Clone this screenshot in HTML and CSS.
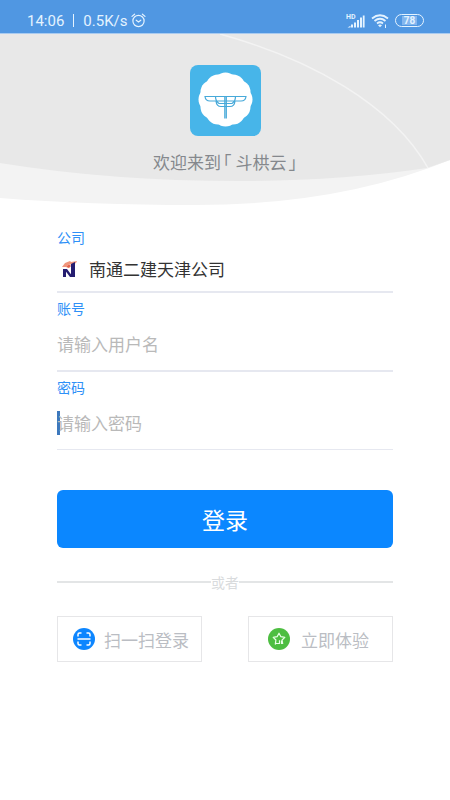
FILE: index.html
```html
<!DOCTYPE html>
<html lang="zh-CN">
<head>
<meta charset="utf-8">
<meta name="viewport" content="width=device-width, initial-scale=1">
<title>登录</title>
<link rel="stylesheet" href="styles.css">
</head>
<body>
<header class="status">
  <div class="status-group">
    <span>14:06</span><i class="status-bar"></i><span>0.5K/s</span>
    <svg class="alarm" width="15" height="15" viewBox="0 0 15 15" fill="none" stroke="currentColor" stroke-width="1.2" stroke-linecap="round">
      <circle cx="7.5" cy="8" r="5.6"/><path d="M5.2 7.2l2.3 1.7 2.3-1.7M1 3.4L3.6 1.2M14 3.4L11.4 1.2"/>
    </svg>
  </div>
  <div class="status-group">
    <svg width="19" height="16" viewBox="0 0 19 16" fill="currentColor">
      <path d="M1.500 14.500l3-1.700V14.500zM5 11.500h2v3H5zM8 9.500h2v5H8zM11 7h2v7.500h-2zM14 4.500h2v10h-2zM16.800 2.500h1.800v12h-1.800z"/>
      <text class="hd" x="0" y="6">HD</text>
    </svg>
    <svg class="wifi" width="18" height="16" viewBox="0 0 18 16" fill="none" stroke="currentColor" stroke-width="1.800">
      <path d="M1 5.500q8-6.500 16 0M3.500 8q5.500-4.500 11 0M6 10.500q3-2.500 6 0"/>
      <path d="M7 12.200q2-1.400 4 0L9 14.300z" fill="currentColor" stroke="none"/>
      <path d="M14.500 11.500v3.500" stroke-width="1"/>
    </svg>
    <span class="battery"><span class="battery-level">78</span></span>
  </div>
</header>

<section class="hero">
  <svg class="hero-bg" viewBox="0 0 450 172" preserveAspectRatio="none">
    <path d="M0 0H450V126Q340 171 195 171Q90 171 0 164Z" fill="#f3f3f3"/>
    <path d="M0 0H450V126L427 134Q340 147 240 147Q110 147 0 129Z" fill="#e8e8e8"/>
    <path d="M220 0C310 25 392 70 428 134" fill="none" stroke="#f3f3f3" stroke-width="1.500"/>
  </svg>
  <svg class="logo" viewBox="0 0 71 71">
    <rect width="71" height="71" rx="8" fill="#47b5e9"/>
    <g fill="#fff">
      <circle cx="35.500" cy="34.500" r="24"/>
      <circle cx="35.500" cy="19.500" r="12"/><circle cx="43" cy="21.500" r="12"/><circle cx="48.500" cy="27" r="12"/>
      <circle cx="50.500" cy="34.500" r="12"/><circle cx="48.500" cy="42" r="12"/><circle cx="43" cy="47.500" r="12"/>
      <circle cx="35.500" cy="49.500" r="12"/><circle cx="28" cy="47.500" r="12"/><circle cx="22.500" cy="42" r="12"/>
      <circle cx="20.500" cy="34.500" r="12"/><circle cx="22.500" cy="27" r="12"/><circle cx="28" cy="21.500" r="12"/>
    </g>
    <g fill="none" stroke="#47a9d9" stroke-width="1.200">
      <path d="M15 31.500H56Q55.500 36 51 36H20Q15.500 36 15 31.500ZM25.500 31.500Q25.500 36 29 38.500H42Q45.500 36 45.500 31.500M26 36Q26.500 41.500 31 41.500H40Q44.500 41.500 45 36"/>
      <path d="M34.800 31.500V53.500M36.300 31.500V53.500"/>
    </g>
  </svg>
  <h1 class="welcome">欢迎来到<span class="bracket bracket-open">「</span>斗栱云<span class="bracket">」</span></h1>
</section>

<main class="content">
  <form class="login">
    <div class="field">
      <label for="company">公司</label>
      <div class="control company">
        <svg class="company-logo" width="17" height="18" viewBox="0 0 17 18">
          <path d="M1 7l3-4 5-2 1 1 6-1-1 2-4 2-3-1-3 3z" fill="#f0967c"/>
          <path d="M10 4l4-2v15h-4zM2 9h3v8H2zM3 9h3l6 8H9z" fill="#251d70"/>
          <path d="M5 7l3-3 2 2-2 2z" fill="#e5654c"/>
        </svg>
        <input id="company" type="text" value="南通二建天津公司">
      </div>
    </div>
    <div class="field">
      <label for="account">账号</label>
      <div class="control"><input id="account" type="text" placeholder="请输入用户名"></div>
    </div>
    <div class="field field-active">
      <label for="password">密码</label>
      <div class="control"><input id="password" type="password" placeholder="请输入密码"></div>
    </div>
    <button class="submit" type="submit">登录</button>
  </form>
  <div class="divider">或者</div>
  <div class="options">
    <button class="option" type="button">
      <svg width="22" height="22" viewBox="0 0 22 22">
        <circle cx="11" cy="11" r="11" fill="#0d86ff"/>
        <path d="M5 8.500V6.500Q5 5 6.500 5H8.500M13.500 5H15.500Q17 5 17 6.500V8.500M17 13.500V15.500Q17 17 15.500 17H13.500M8.500 17H6.500Q5 17 5 15.500V13.500M4.500 11H17.500" fill="none" stroke="#fff" stroke-width="1.500"/>
      </svg>
      <span>扫一扫登录</span>
    </button>
    <button class="option option-trial" type="button">
      <svg width="22" height="22" viewBox="0 0 22 22">
        <circle cx="11" cy="11" r="11" fill="#4dbe41"/>
        <path d="M8.500 14.800L7.300 16l.6-4L5.200 9.300l3.900-.6L11 5.200l1.900 3.500 3.900.6-2.700 2.700.6 4M8.300 15.500h3.200v-3.300M13.500 16v-3.500" fill="none" stroke="#e9ffe6" stroke-width="1.200" stroke-linejoin="round"/>
      </svg>
      <span>立即体验</span>
    </button>
  </div>
</main>
</body>
</html>
```
FILE: styles.css
```css
* {
  box-sizing: border-box;
}

body {
  margin: 0;
  min-height: 100vh;
  background: #fff;
  color: #333;
  font-family: "Noto Sans CJK SC", sans-serif;
}

button,
input {
  font: inherit;
  color: inherit;
}

.status {
  display: flex;
  justify-content: space-between;
  align-items: center;
  height: 34px;
  padding: 8px 26px 0 27px;
  background: #5097e2;
  border-bottom: 1px solid #a9cbf0;
  color: #e4f3ff;
  font-family: Roboto, sans-serif;
  font-size: 15px;
}

.status-group {
  display: flex;
  align-items: center;
}

.status-bar {
  width: 1px;
  height: 13px;
  margin: 0 9px;
  background: currentColor;
}

.alarm {
  margin-left: 3px;
}

.hd {
  font-size: 7px;
  font-weight: 700;
}

.wifi {
  margin: 0 6px;
}

.battery {
  display: flex;
  width: 29px;
  height: 13px;
  padding: 1px 6px;
  border: 1px solid currentColor;
  border-radius: 7px;
}

.battery-level {
  flex: 1;
  background: #83b6ee;
  font-size: 10px;
  font-weight: 700;
  line-height: 10px;
  text-align: center;
}

.hero {
  position: relative;
  display: flex;
  flex-direction: column;
  align-items: center;
  height: 172px;
  padding-top: 31px;
}

.hero-bg {
  position: absolute;
  inset: 0;
  width: 100%;
  height: 100%;
}

.logo {
  position: relative;
  width: 71px;
  height: 71px;
}

.welcome {
  position: relative;
  margin: 14px 0 0;
  color: #85888d;
  font-size: 17px;
  font-weight: 400;
  line-height: 24px;
}

.bracket {
  margin-left: 2px;
  font-feature-settings: "halt";
}

.bracket-open {
  margin-right: 4px;
}

.content {
  padding: 16px 57px;
}

.field {
  padding-top: 5px;
  border-bottom: 2px solid #e6e8f0;
}

.field label {
  display: block;
  color: #2e90f7;
  font-size: 14px;
  line-height: 20px;
}

.control {
  display: flex;
  align-items: center;
  height: 52px;
}

.control input {
  flex: 1;
  min-width: 0;
  padding: 0;
  border: 0;
  outline: 0;
  background: none;
  font-size: 17px;
  line-height: 24px;
}

.control input::placeholder {
  color: #b9b9b9;
  opacity: 1;
}

.company {
  gap: 11px;
  height: 44px;
  padding-left: 4px;
}

.field-active {
  border-bottom-width: 1px;
}

.field-active input {
  height: 24px;
  box-shadow: inset 3px 0 #3d78bd;
}

.submit {
  display: block;
  width: 100%;
  height: 58px;
  margin-top: 40px;
  padding: 0;
  border: 0;
  border-radius: 6px;
  background: #0b87ff;
  color: #fff;
  font-size: 23px;
}

.divider {
  display: flex;
  align-items: center;
  margin-top: 24px;
  color: #d9dbdd;
  font-size: 14px;
  line-height: 20px;
}

.divider::before,
.divider::after {
  content: "";
  flex: 1;
  height: 2px;
  background: #e3e5e6;
}

.options {
  display: grid;
  grid-template-columns: 1fr 1fr;
  gap: 46px;
  margin-top: 24px;
}

.option {
  display: flex;
  align-items: center;
  gap: 9px;
  height: 46px;
  padding: 0 0 0 15px;
  border: 1px solid #e6e6e8;
  background: #fff;
  color: #babdc3;
  font-size: 17px;
  white-space: nowrap;
}

.option-trial {
  gap: 11px;
  padding-left: 19px;
}
```
